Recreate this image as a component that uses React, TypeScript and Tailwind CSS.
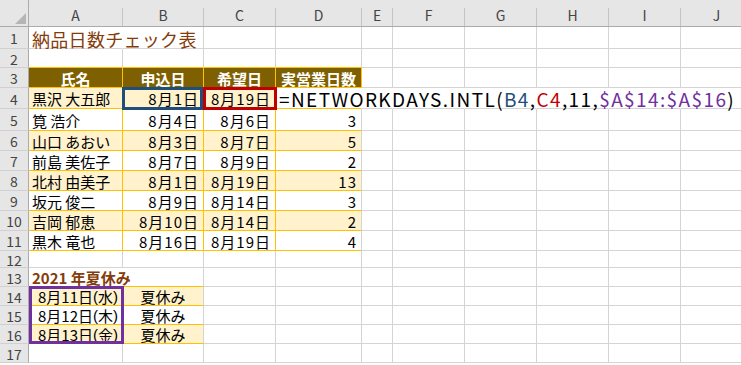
import React from "react";

const GR = "border-r-[#d4d4d4]";
const OR = "border-r-[#ffc000]";
const WR = "border-r-white";
const GB = "border-b-[#d4d4d4]";
const OB = "border-b-[#ffc000]";
const YEL = "bg-[#fff2cc]";

function Cell({
  r = GR,
  b = GB,
  cls = "",
  children,
}: {
  r?: string;
  b?: string;
  cls?: string;
  children?: React.ReactNode;
}) {
  return (
    <div className={`border-r border-b ${r} ${b} ${cls} flex items-center min-w-0 whitespace-nowrap leading-none`}>
      {children}
    </div>
  );
}

function RowHead({ n }: { n: number }) {
  return (
    <div className="bg-[#e6e6e6] border-r border-b border-r-[#ababab] border-b-[#d0d0d0] flex items-center justify-center text-[14px] leading-none text-[#444] pt-[1px]">
      {n}
    </div>
  );
}

function ColHead({ l }: { l: string }) {
  return (
    <div className="bg-[#e6e6e6] border-b border-b-[#ababab] flex items-end">
      <span className="flex-1 text-center text-[14px] text-[#444] pb-[2px] leading-[18px]">{l}</span>
      <div className="w-px h-[18px] bg-[#c4c4c4]" />
    </div>
  );
}

function Blank({ n }: { n: number }) {
  return (
    <>
      {Array.from({ length: n }).map((_, i) => (
        <Cell key={i} />
      ))}
    </>
  );
}

const data = [
  { name: "黒沢 大五郎", b: "8月1日", c: "8月19日", d: "" },
  { name: "筧 浩介", b: "8月4日", c: "8月6日", d: "3" },
  { name: "山口 あおい", b: "8月3日", c: "8月7日", d: "5" },
  { name: "前島 美佐子", b: "8月7日", c: "8月9日", d: "2" },
  { name: "北村 由美子", b: "8月1日", c: "8月19日", d: "13" },
  { name: "坂元 俊二", b: "8月9日", c: "8月14日", d: "3" },
  { name: "吉岡 郁恵", b: "8月10日", c: "8月14日", d: "2" },
  { name: "黒木 竜也", b: "8月16日", c: "8月19日", d: "4" },
];

const hol = [
  { day: "11", w: "水", y: true },
  { day: "12", w: "木", y: false },
  { day: "13", w: "金", y: true },
];

export default function App() {
  return (
    <div className="w-[741px] h-[365px] overflow-hidden bg-white font-['Noto_Sans_CJK_JP',sans-serif] text-black">
      <div className="grid grid-cols-[29px_94px_81px_72px_86px_31px_72px_72px_72px_72px_72px] grid-rows-[27px_22px_19px_20px_21px_22px_20px_20px_20px_20px_20px_20px_17px_19px_19px_19px_19px_19px] w-[753px]">
        {/* column headers */}
        <div className="bg-[#e6e6e6] border-r border-b border-r-[#ababab] border-b-[#ababab] flex items-end justify-end pr-[2px] pb-[2px]">
          <svg width="11" height="11" viewBox="0 0 11 11">
            <polygon points="11,0 11,11 0,11" fill="#b5b5b5" />
          </svg>
        </div>
        {["A", "B", "C", "D", "E", "F", "G", "H", "I", "J"].map((l) => (
          <ColHead key={l} l={l} />
        ))}

        {/* row 1 */}
        <RowHead n={1} />
        <Cell r={WR} cls="pl-[3px]">
          <span className="relative z-10 text-[18px] text-[#843c0c] leading-none pt-[2px] tracking-[0.3px]">納品日数チェック表</span>
        </Cell>
        <Blank n={9} />

        {/* row 2 */}
        <RowHead n={2} />
        <Cell b={OB} />
        <Cell b={OB} />
        <Cell b={OB} />
        <Cell b={OB} />
        <Blank n={6} />

        {/* row 3 */}
        <RowHead n={3} />
        {["氏名", "申込日", "希望日", "実営業日数"].map((h) => (
          <Cell key={h} r={OR} b={OB} cls="bg-[#7f6000] justify-center text-white font-bold text-[15px] pt-[1px]">
            {h}
          </Cell>
        ))}
        <Blank n={6} />

        {/* rows 4-11 */}
        {data.map((row, i) => {
          const n = i + 4;
          const y = i % 2 === 0;
          const fill = y ? YEL : "bg-white";
          if (i === 0) {
            return (
              <React.Fragment key={n}>
                <RowHead n={n} />
                <Cell r={OR} b={OB} cls={`${YEL} pl-[3px] text-[15px] pt-[1px]`}>
                  {row.name}
                </Cell>
                <Cell r={OR} b={OB} cls={`${YEL} justify-end pr-[4px] text-[15px] tracking-[1px] pt-[1px] relative`}>
                  {row.b}
                  <div className="absolute left-[-1px] top-[-1px] w-[81px] h-[23px] border-[3px] border-[#1f4e79] z-20" />
                </Cell>
                <Cell r={OR} b={OB} cls={`${YEL} justify-end pr-[4px] text-[15px] tracking-[1px] pt-[1px] relative`}>
                  {row.c}
                  <div className="absolute left-[-1px] top-[-1px] w-[74px] h-[23px] border-[3px] border-[#c00000] z-20" />
                </Cell>
                <Cell r={WR} b={OB} cls="bg-white pl-[3px]">
                  <span className="relative z-10 text-[19px] tracking-[1.4px] leading-none pt-[1px]">
                    =NETWORKDAYS.INTL(<span className="text-[#1f4e79]">B4</span>,<span className="text-[#c00000]">C4</span>,11,
                    <span className="text-[#7030a0]">$A$14:$A$16</span>)
                  </span>
                </Cell>
                <Cell r={WR} />
                <Cell r={WR} />
                <Cell r={WR} />
                <Cell r={WR} />
                <Cell r={WR} />
                <Cell />
              </React.Fragment>
            );
          }
          return (
            <React.Fragment key={n}>
              <RowHead n={n} />
              <Cell r={OR} b={OB} cls={`${fill} pl-[3px] text-[15px] pt-[1px]`}>
                {row.name}
              </Cell>
              <Cell r={OR} b={OB} cls={`${fill} justify-end pr-[4px] text-[15px] tracking-[1px] pt-[1px]`}>
                {row.b}
              </Cell>
              <Cell r={OR} b={OB} cls={`${fill} justify-end pr-[4px] text-[15px] tracking-[1px] pt-[1px]`}>
                {row.c}
              </Cell>
              <Cell r={GR} b={OB} cls={`${fill} justify-end pr-[4px] text-[15px] tracking-[1px] pt-[1px]`}>
                {row.d}
              </Cell>
              <Blank n={6} />
            </React.Fragment>
          );
        })}

        {/* row 12 */}
        <RowHead n={12} />
        <Blank n={10} />

        {/* row 13 */}
        <RowHead n={13} />
        <Cell r={WR} b={OB} cls="pl-[3px]">
          <span className="relative z-10 text-[15px] font-bold text-[#843c0c] pt-[1px]">2021 年夏休み</span>
        </Cell>
        <Cell b={OB} />
        <Blank n={8} />

        {/* rows 14-16 */}
        {hol.map((h, i) => {
          const n = 14 + i;
          const fill = h.y ? YEL : "bg-white";
          return (
            <React.Fragment key={n}>
              <RowHead n={n} />
              <Cell r={OR} b={OB} cls={`${fill} justify-end pr-[4px] text-[15px] pt-[1px] relative`}>
                <span>8月{h.day}日</span>
                <span className="font-['Liberation_Sans',sans-serif]">(</span>
                <span>{h.w}</span>
                <span className="font-['Liberation_Sans',sans-serif]">)</span>
                {i === 0 && (
                  <div className="absolute left-0 top-[-1px] w-[95px] h-[58px] border-[3px] border-[#7030a0] z-20" />
                )}
              </Cell>
              <Cell r={GR} b={OB} cls={`${fill} justify-center text-[15px] pt-[1px]`}>
                夏休み
              </Cell>
              <Blank n={8} />
            </React.Fragment>
          );
        })}

        {/* row 17 */}
        <RowHead n={17} />
        <Blank n={10} />
      </div>
    </div>
  );
}
